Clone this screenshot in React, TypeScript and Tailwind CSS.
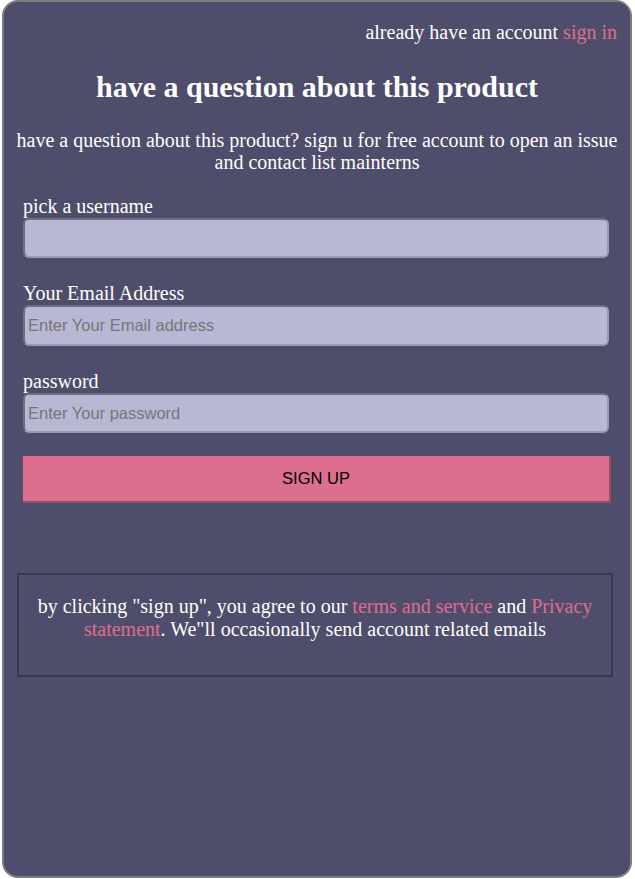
export default function App() {
  return (
    <div className="w-[635px] h-[879px] bg-white">
      <div className="ml-[2px] w-[630px] h-[878px] rounded-[16px] border-2 border-[#7d7d80] bg-[#4e4d6b] text-white font-['Liberation_Serif',serif]">
        <p className="pt-[19px] pr-[13px] text-right text-[20px] leading-[22px]">
          already have an account <a className="text-[#e06d8e]">sign in</a>
        </p>
        <h1 className="mt-[27px] text-center text-[30px] font-bold leading-[34px]">have a question about this product</h1>
        <p className="mt-[25px] px-[6px] text-center text-[20px] leading-[22px]">
          have a question about this product? sign u for free account to open an issue and contact list mainterns
        </p>
        <form className="mt-[22px] ml-[19px] mr-[21px] flex flex-col">
          <label className="text-[20px] leading-[22px]">pick a username</label>
          <input className="mt-[1px] h-[40px] rounded-[6px] border-2 border-[#6e6e80] border-r-[#9a9aae] border-b-[#9a9aae] bg-[#b8b8d5] px-[3px] font-['Liberation_Sans',sans-serif] text-[16.5px] text-black outline-none" />
          <label className="mt-[24px] text-[20px] leading-[22px]">Your Email Address</label>
          <input
            placeholder="Enter Your Email address"
            className="mt-[1px] h-[41px] rounded-[6px] border-2 border-[#6e6e80] border-r-[#9a9aae] border-b-[#9a9aae] bg-[#b8b8d5] px-[3px] font-['Liberation_Sans',sans-serif] text-[16.5px] text-black placeholder:text-[#767676] outline-none"
          />
          <label className="mt-[24px] text-[20px] leading-[22px]">password</label>
          <input
            type="password"
            placeholder="Enter Your password"
            className="mt-[1px] h-[40px] rounded-[6px] border-2 border-[#6e6e80] border-r-[#9a9aae] border-b-[#9a9aae] bg-[#b8b8d5] px-[3px] font-['Liberation_Sans',sans-serif] text-[16.5px] text-black placeholder:text-[#767676] outline-none"
          />
          <button
            type="button"
            className="mt-[23px] mr-[-2px] h-[47px] border-r-2 border-b-2 border-[#9a4a62] bg-[#dc6f8e] font-['Liberation_Sans',sans-serif] text-[16.5px] text-black"
          >
            SIGN UP
          </button>
        </form>
        <div className="mt-[70px] ml-[13px] w-[596px] h-[104px] border-2 border-[#38374f] px-[10px] pt-[20px] text-center text-[20px] leading-[23px]">
          by clicking "sign up", you agree to our <a className="text-[#e06d8e]">terms and service</a> and{" "}
          <a className="text-[#e06d8e]">Privacy statement</a>. We"ll occasionally send account related emails
        </div>
      </div>
    </div>
  );
}
